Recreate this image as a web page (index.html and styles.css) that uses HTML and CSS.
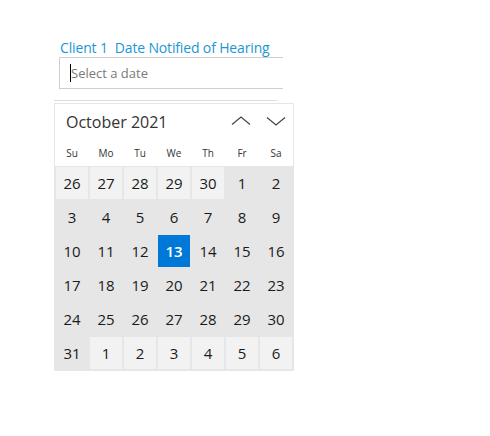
FILE: index.html
```html
<!DOCTYPE html>
<html lang="en">
<head>
    <meta charset="UTF-8">
    <meta name="viewport" content="width=device-width, initial-scale=1.0">
    <title>Date picker</title>
    <link rel="stylesheet" href="styles.css">
</head>
<body>
    <div class="page">
        <div class="field-label">Client 1&nbsp; Date Notified of Hearing</div>
        <div class="date-input">
            <span class="caret"></span><span class="placeholder">Select a date</span>
        </div>
        <div class="divider"></div>
        <div class="calendar">
            <div class="cal-head">
                <span class="cal-title">October 2021</span>
                <div class="cal-nav">
                    <svg width="20" height="10" viewBox="0 0 20 10"><polyline points="1,8.5 10,1 19,8.5" fill="none" stroke="#444" stroke-width="1.2"/></svg>
                    <svg width="20" height="10" viewBox="0 0 20 10"><polyline points="1,1.5 10,9 19,1.5" fill="none" stroke="#444" stroke-width="1.2"/></svg>
                </div>
            </div>
            <div class="weekdays">
                <span>Su</span><span>Mo</span><span>Tu</span><span>We</span><span>Th</span><span>Fr</span><span>Sa</span>
            </div>
            <div class="days">
                <span class="other">26</span><span class="other">27</span><span class="other">28</span><span class="other">29</span><span class="other">30</span><span>1</span><span>2</span>
                <span>3</span><span>4</span><span>5</span><span>6</span><span>7</span><span>8</span><span>9</span>
                <span>10</span><span>11</span><span>12</span><span class="selected">13</span><span>14</span><span>15</span><span>16</span>
                <span>17</span><span>18</span><span>19</span><span>20</span><span>21</span><span>22</span><span>23</span>
                <span>24</span><span>25</span><span>26</span><span>27</span><span>28</span><span>29</span><span>30</span>
                <span>31</span><span class="other">1</span><span class="other">2</span><span class="other">3</span><span class="other">4</span><span class="other">5</span><span class="other">6</span>
            </div>
        </div>
    </div>
</body>
</html>
```

FILE: styles.css
```css
body {
    margin: 0;
    font-family: "Open Sans", "Noto Sans", sans-serif;
    background-color: #fff;
    color: #1a1a1a;
}
.page {
    padding: 38px 0 0 54px;
}
.field-label {
    margin-left: 6px;
    font-size: 14px;
    line-height: 19px;
    letter-spacing: -0.15px;
    color: #1a97d4;
}
.date-input {
    margin-left: 5px;
    width: 224px;
    height: 32px;
    box-sizing: border-box;
    border: 1px solid #cfcfcf;
    border-right: none;
    display: flex;
    align-items: center;
    padding-left: 10px;
}
.caret {
    display: inline-block;
    width: 1px;
    height: 18px;
    background-color: #000;
}
.placeholder {
    font-size: 13px;
    color: #7a7a7a;
}
.divider {
    width: 223px;
    height: 1px;
    background-color: #dcdcdc;
    margin-top: 11px;
}
.calendar {
    width: 238px;
    margin-top: 2px;
    border: 1px solid #e6e6e6;
    background-color: #fff;
}
.cal-head {
    height: 36px;
    display: flex;
    align-items: center;
    justify-content: space-between;
    padding-left: 11px;
    padding-right: 7px;
}
.cal-title {
    font-size: 16px;
    color: #333;
}
.cal-nav {
    display: flex;
    gap: 15px;
    margin-top: -3px;
}
.weekdays {
    display: grid;
    grid-template-columns: repeat(7, 34px);
    height: 26px;
    align-items: center;
    font-size: 10px;
    color: #333;
    text-align: center;
}
.days {
    display: grid;
    grid-template-columns: repeat(7, 34px);
    grid-auto-rows: 34px;
    background-color: #e6e6e6;
}
.days span {
    margin: 1px;
    display: flex;
    align-items: center;
    justify-content: center;
    font-size: 15px;
    color: #1a1a1a;
}
.days span.other {
    background-color: #f2f2f2;
}
.days span.selected {
    background-color: #0078d7;
    color: #fff;
    font-weight: 600;
}
```
